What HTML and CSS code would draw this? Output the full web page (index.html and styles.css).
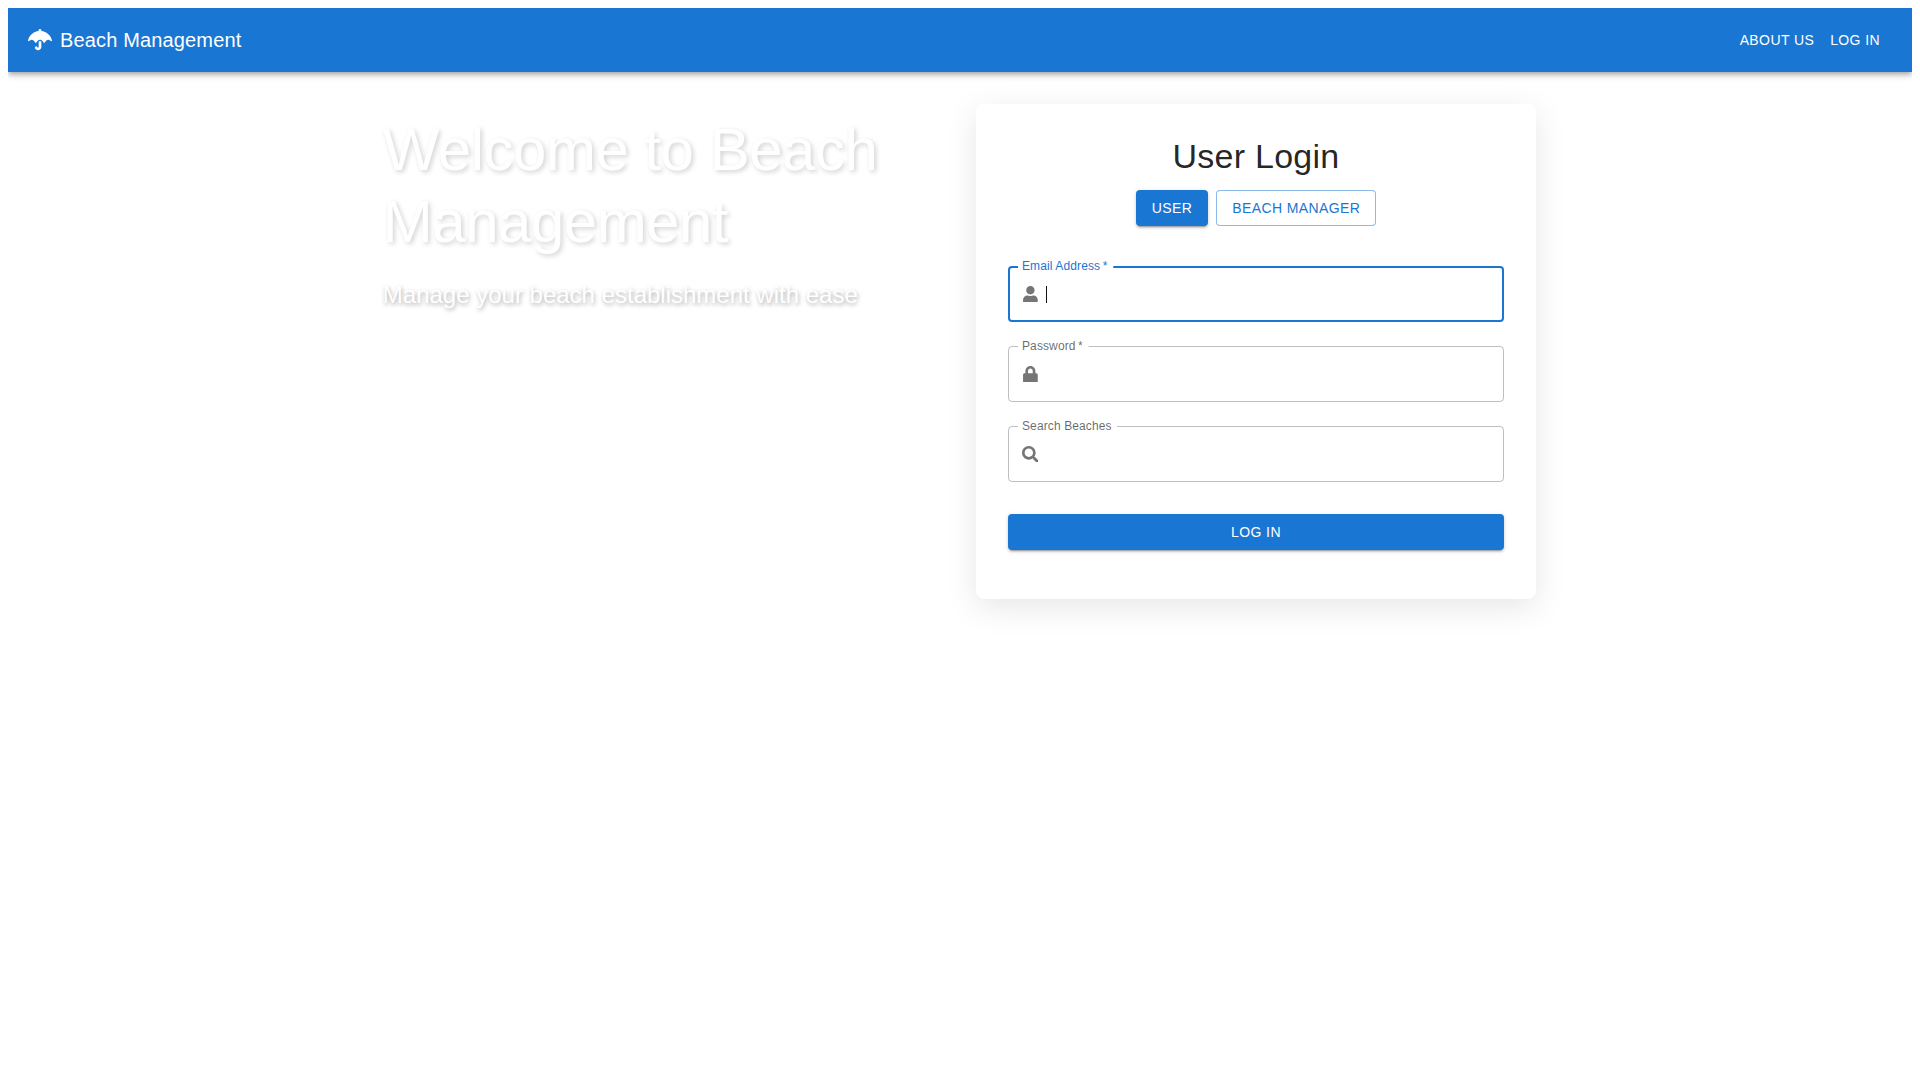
FILE: index.html
```html
<!DOCTYPE html>
<html lang="en">
<head>
<meta charset="utf-8">
<title>Beach Management</title>
<link rel="stylesheet" href="styles.css">
</head>
<body>
<header class="appbar">
  <div class="brand">
    <svg class="brand-icon" viewBox="0 0 576 512" aria-hidden="true"><path d="M575.700 280.800C547.100 144.500 437.300 62.600 320 49.900V32c0-17.700-14.300-32-32-32s-32 14.300-32 32v17.900C138.300 62.600 29.500 144.500.3 280.800c-2.200 10.100 8.500 21.300 18.700 11.400 52-55 107.700-52.400 158.600 37 5.300 9.500 14.900 8.600 19.700 0 20.200-35.400 44.900-73.200 90.700-73.200 58.500 0 88.200 68.800 90.700 73.200 4.800 8.600 14.400 9.500 19.700 0 51-89.500 107.100-91.400 158.600-37 10.300 9.900 20.900-1.300 18.700-11.400zM256 301.700V432c0 8.800-7.200 16-16 16-7.800 0-13.200-5.300-15.100-10.700-5.900-16.700-24.100-25.400-40.800-19.500-16.700 5.900-25.400 24.200-19.500 40.800 11.200 31.900 41.600 53.300 75.400 53.300 44.100 0 80-35.900 80-80V301.600c-9.100-7.900-19.800-13.600-32-13.600-12.300 0-23 5.800-32 13.700z"/></svg>
    <span class="brand-name">Beach Management</span>
  </div>
  <nav class="nav">
    <a class="nav-link">About Us</a>
    <a class="nav-link">Log In</a>
  </nav>
</header>
<main class="layout">
  <section class="hero">
    <h1 class="hero-title">Welcome to Beach Management</h1>
    <p class="hero-sub">Manage your beach establishment with ease</p>
  </section>
  <section class="card">
    <h2 class="card-title">User Login</h2>
    <div class="role-row">
      <button class="btn btn-solid" type="button">User</button>
      <button class="btn btn-outline" type="button">Beach Manager</button>
    </div>
    <form class="form">
      <div class="field field-focus">
        <label class="field-label">Email Address&thinsp;*</label>
        <svg class="field-icon" viewBox="0 0 448 512"><path d="M224 256c70.700 0 128-57.300 128-128S294.700 0 224 0 96 57.300 96 128s57.300 128 128 128zm89.600 32h-16.700c-22.200 10.200-46.900 16-72.900 16s-50.600-5.800-72.900-16h-16.700C60.200 288 0 348.200 0 422.400V464c0 26.500 21.500 48 48 48h352c26.500 0 48-21.500 48-48v-41.600c0-74.200-60.200-134.400-134.400-134.400z"/></svg>
        <span class="caret"></span>
        <input class="field-input" type="text">
      </div>
      <div class="field">
        <label class="field-label">Password&thinsp;*</label>
        <svg class="field-icon" viewBox="0 0 448 512"><path d="M400 224h-24v-72C376 68.200 307.800 0 224 0S72 68.200 72 152v72H48c-26.500 0-48 21.500-48 48v192c0 26.500 21.500 48 48 48h352c26.500 0 48-21.500 48-48V272c0-26.500-21.500-48-48-48zm-104 0H152v-72c0-39.700 32.300-72 72-72s72 32.300 72 72v72z"/></svg>
        <input class="field-input" type="password">
      </div>
      <div class="field">
        <label class="field-label">Search Beaches</label>
        <svg class="field-icon" viewBox="0 0 512 512"><path d="M505 442.700L405.300 343c-4.500-4.500-10.600-7-17-7H372c27.600-35.300 44-79.700 44-128C416 93.100 322.900 0 208 0S0 93.100 0 208s93.100 208 208 208c48.300 0 92.700-16.400 128-44v16.300c0 6.400 2.500 12.500 7 17l99.700 99.700c9.400 9.400 24.600 9.400 33.900 0l28.300-28.300c9.400-9.400 9.400-24.600.1-34zM208 336c-70.700 0-128-57.200-128-128 0-70.700 57.200-128 128-128 70.700 0 128 57.200 128 128 0 70.700-57.200 128-128 128z"/></svg>
        <input class="field-input" type="text">
      </div>
      <button class="btn btn-solid btn-full" type="button">Log In</button>
    </form>
  </section>
</main>
</body>
</html>
```
FILE: styles.css
```css
* { box-sizing: border-box; }
body {
  margin: 8px;
  min-height: calc(100vh - 16px);
  background: #fff;
  font-family: "Liberation Sans", Arial, sans-serif;
  color: rgba(0, 0, 0, 0.87);
}
.appbar {
  height: 64px;
  display: flex;
  align-items: center;
  justify-content: space-between;
  padding: 0 24px 0 20px;
  background: #1976d2;
  color: #fff;
  box-shadow: 0 2px 4px -1px rgba(0,0,0,.2), 0 4px 5px 0 rgba(0,0,0,.14), 0 1px 10px 0 rgba(0,0,0,.12);
}
.brand { display: flex; align-items: center; gap: 8px; }
.brand-icon { width: 24px; height: 21.33px; fill: #fff; display: block; }
.brand-name { font-size: 20px; line-height: 32px; letter-spacing: 0.15px; }
.nav { display: flex; }
.nav-link {
  padding: 6px 8px;
  font-size: 14px;
  line-height: 24px;
  letter-spacing: 0.4px;
  text-transform: uppercase;
}
.layout {
  width: 1152px;
  margin: 32px auto 0;
  display: grid;
  grid-template-columns: 560px 560px;
  column-gap: 32px;
  align-items: start;
}
.hero { padding-top: 9.5px; margin-left: -1.2px; }
.hero-title {
  margin: 0 0 21.5px;
  font-size: 60px;
  line-height: 72px;
  font-weight: 400;
  letter-spacing: -0.5px;
  color: #fff;
  text-shadow: 2px 2px 5px rgba(0,0,0,.18);
}
.hero-sub {
  margin: 0;
  font-size: 24px;
  line-height: 32px;
  color: #fff;
  opacity: .95;
  text-shadow: 1px 2px 4px rgba(0,0,0,.35);
}
.card {
  background: #fff;
  border-radius: 8px;
  padding: 32px;
  box-shadow: 0 8px 32px rgba(0,0,0,.1);
}
.card-title {
  margin: 0 0 14px;
  text-align: center;
  font-size: 34px;
  line-height: 40px;
  font-weight: 400;
  letter-spacing: 0.25px;
}
.role-row { display: flex; justify-content: center; gap: 8px; margin-bottom: 32px; }
.btn {
  font: inherit;
  font-size: 14px;
  line-height: 24px;
  letter-spacing: 0.4px;
  text-transform: uppercase;
  border-radius: 4px;
  height: 36px;
  padding: 0 16px;
  cursor: pointer;
}
.btn-solid {
  background: #1976d2;
  color: #fff;
  border: 0;
  box-shadow: 0 3px 1px -2px rgba(0,0,0,.2), 0 2px 2px 0 rgba(0,0,0,.14), 0 1px 5px 0 rgba(0,0,0,.12);
}
.btn-outline {
  background: #fff;
  color: #1976d2;
  border: 1px solid rgba(25,118,210,.5);
  padding: 0 15px;
}
.btn-full { width: 100%; margin-top: 8px; display: block; }
.form { display: flex; flex-direction: column; gap: 24px; padding-top: 8px; padding-bottom: 16.5px; }
.field {
  position: relative;
  height: 56px;
  display: flex;
  align-items: center;
  padding: 0 13px;
  gap: 8px;
  border: 1px solid rgba(0,0,0,.25);
  border-radius: 4px;
}
.field-focus { border: 2px solid #1976d2; padding: 0 12px; }
.field-label {
  position: absolute;
  left: 9px;
  top: -8px;
  padding: 0 7.5px 0 5.33px;
  background: #fff;
  font-size: 16px;
  line-height: 19px;
  letter-spacing: .15px;
  color: rgba(0,0,0,.6);
  transform: scale(.75);
  transform-origin: 0 0;
  white-space: nowrap;
}
.field-focus .field-label { left: 8px; top: -9px; color: #1976d2; }
.field-icon { width: 16.8px; height: 16.8px; fill: #757575; flex: none; margin-left: -.4px; }
.field-input {
  flex: 1;
  min-width: 0;
  border: 0;
  outline: 0;
  background: transparent;
  font: inherit;
  font-size: 16px;
}
.caret {
  position: absolute;
  left: 36px;
  top: 18px;
  width: 1px;
  height: 17px;
  background: #111;
}
```
